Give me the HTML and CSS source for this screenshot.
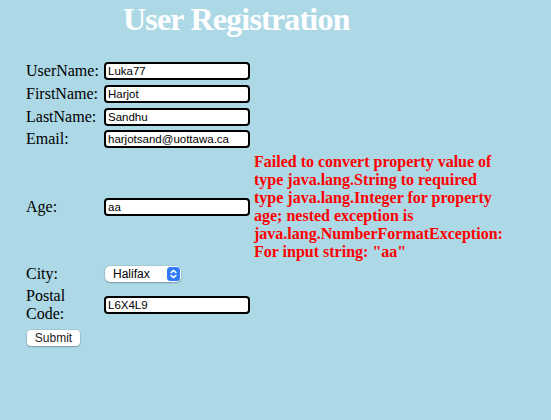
FILE: index.html
```html
<!DOCTYPE html>
<html>
<head>
<meta charset="utf-8">
<title>User Registration</title>
<link rel="stylesheet" href="styles.css">
</head>
<body>
<h1 class="title">User Registration</h1>
<form class="form">
  <label class="lbl">UserName:</label>
  <div class="cell"><input class="field" type="text" value="Luka77"></div>
  <div class="err"></div>

  <label class="lbl">FirstName:</label>
  <div class="cell"><input class="field" type="text" value="Harjot"></div>
  <div class="err"></div>

  <label class="lbl">LastName:</label>
  <div class="cell"><input class="field" type="text" value="Sandhu"></div>
  <div class="err"></div>

  <label class="lbl">Email:</label>
  <div class="cell"><input class="field" type="text" value="harjotsand@uottawa.ca"></div>
  <div class="err"></div>

  <label class="lbl">Age:</label>
  <div class="cell"><input class="field" type="text" value="aa"></div>
  <div class="err">Failed to convert property value of type java.lang.String to required type java.lang.Integer for property age; nested exception is java.lang.NumberFormatException: For input string: "aa"</div>

  <label class="lbl">City:</label>
  <div class="cell">
    <div class="select">
      <span class="select-text">Halifax</span>
      <svg class="stepper" width="13" height="14" viewBox="0 0 13 14">
        <rect x="0" y="0" width="13" height="14" rx="3.5" fill="#2f7cf6"/>
        <path d="M4 5.6 L6.5 3.4 L9 5.6" fill="none" stroke="#fff" stroke-width="1.4" stroke-linecap="round" stroke-linejoin="round"/>
        <path d="M4 8.4 L6.5 10.6 L9 8.4" fill="none" stroke="#fff" stroke-width="1.4" stroke-linecap="round" stroke-linejoin="round"/>
      </svg>
    </div>
  </div>
  <div class="err"></div>

  <label class="lbl">Postal Code:</label>
  <div class="cell"><input class="field" type="text" value="L6X4L9"></div>
  <div class="err"></div>

  <div class="lbl"><button class="submit" type="button">Submit</button></div>
</form>
</body>
</html>
```
FILE: styles.css
```css
html, body {
  margin: 0;
  padding: 0;
}
body {
  background: #add8e6;
  font-family: "Liberation Serif", "Times New Roman", serif;
  font-size: 16px;
  color: #000;
  height: 420px;
}
.title {
  margin: 0;
  padding: 1px 0 0 123px;
  font-size: 32px;
  letter-spacing: -0.8px;
  line-height: 37px;
  font-weight: bold;
  color: #fff;
}
.form {
  margin: 24px 0 0 26px;
  display: grid;
  grid-template-columns: 78px 150px 256px;
  grid-auto-rows: minmax(18.67px, auto);
  row-gap: 4px;
  align-items: center;
}
.lbl {
  line-height: 18px;
  font-size: 16px;
}
.cell {
  display: flex;
  align-items: center;
}
.field {
  box-sizing: border-box;
  width: 146px;
  height: 18px;
  margin: 0;
  padding: 0 2px;
  border: 2px solid #000;
  border-radius: 4px;
  background: #fff;
  font-family: "Liberation Sans", Arial, sans-serif;
  font-size: 11.5px;
  color: #000;
  outline: none;
}
.err {
  color: #ff0000;
  font-weight: bold;
  font-size: 16px;
  line-height: 18px;
}
.select {
  box-sizing: border-box;
  width: 76px;
  height: 16px;
  margin-left: 1px;
  display: flex;
  align-items: center;
  justify-content: space-between;
  padding: 0 1px 0 8px;
  background: #fff;
  border-radius: 5px;
  box-shadow: 0 0 0 0.5px rgba(0,0,0,0.12), 0 1px 1.5px rgba(0,0,0,0.25);
  font-family: "Liberation Sans", Arial, sans-serif;
  font-size: 12px;
}
.select-text {
  line-height: 14px;
}
.stepper {
  display: block;
}
.submit {
  box-sizing: border-box;
  margin: 0 0 0 1px;
  width: 53px;
  height: 16px;
  padding: 0;
  border: none;
  border-radius: 4px;
  background: #fff;
  box-shadow: 0 0 0 0.5px rgba(0,0,0,0.12), 0 1px 1.5px rgba(0,0,0,0.25);
  font-family: "Liberation Sans", Arial, sans-serif;
  font-size: 12px;
  color: #222;
  line-height: 16px;
}
```
